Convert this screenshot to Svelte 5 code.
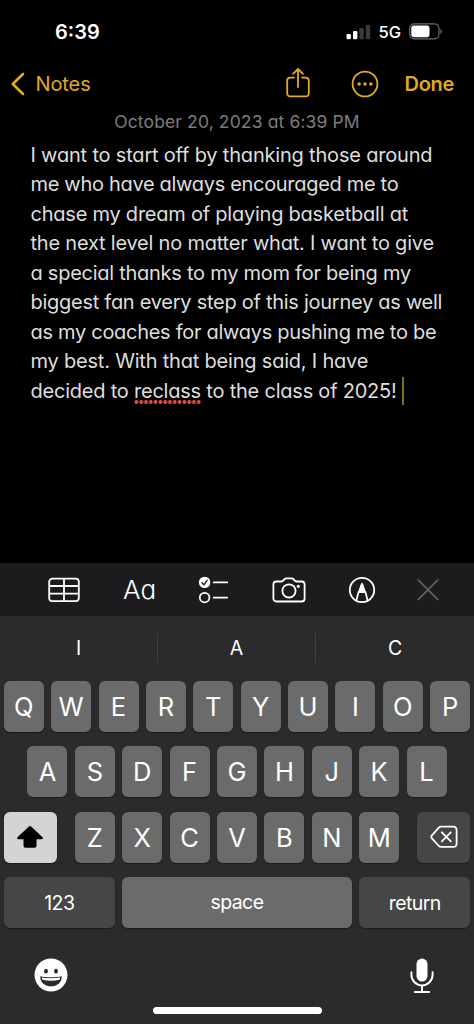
<script>
  // tracking is the letter spacing of each line, in px
  const lines = [
    { text: 'I want to start off by thanking those around', tracking: -0.19 },
    { text: 'me who have always encouraged me to', tracking: -0.31 },
    { text: 'chase my dream of playing basketball at', tracking: -0.23 },
    { text: 'the next level no matter what. I want to give', tracking: -0.21 },
    { text: 'a special thanks to my mom for being my', tracking: -0.26 },
    { text: 'biggest fan every step of this journey as well', tracking: -0.27 },
    { text: 'as my coaches for always pushing me to be', tracking: -0.29 },
    { text: 'my best. With that being said, I have', tracking: -0.2 }
  ];

  const suggestions = ['I', 'A', 'C'];
  const topRow = [...'QWERTYUIOP'];
  const homeRow = [...'ASDFGHJKL'];
  const bottomRow = [...'ZXCVBNM'];
</script>

<main>
  <header class="status">
    <span class="time">6:39</span>
    <div class="signal">
      <svg width="25" height="16" viewBox="0 0 25 16">
        <rect x="0.5" y="10" width="4.4" height="5.3" rx="1.2" fill="#fff" />
        <rect x="7" y="7" width="4.4" height="8.3" rx="1.2" fill="#fff" />
        <rect x="13.4" y="4" width="4.4" height="11.3" rx="1.2" fill="#3a3a3c" />
        <rect x="19.8" y="0.8" width="4.4" height="14.5" rx="1.2" fill="#3a3a3c" />
      </svg>
      <span class="network">5G</span>
      <svg class="battery" width="34" height="17" viewBox="0 0 34 17">
        <rect x="0.7" y="0.9" width="29.2" height="15" rx="4.4" fill="none" stroke="#6e6e70" stroke-width="1.2" />
        <rect x="2.3" y="2.6" width="18.2" height="11.6" rx="2.6" fill="#fff" />
        <path d="M31.3 6v5c1.9-.8 1.9-4.2 0-5z" fill="#6e6e70" />
      </svg>
    </div>
  </header>

  <nav>
    <div class="back">
      <svg width="16" height="26" viewBox="0 0 16 26">
        <path d="M14 3 3.8 13 14 23" fill="none" stroke="currentColor" stroke-width="2.7" stroke-linecap="round" stroke-linejoin="round" />
      </svg>
      <span>Notes</span>
    </div>
    <div class="actions">
      <svg class="share" width="26" height="32" viewBox="0 0 26 32" fill="none" stroke="currentColor" stroke-width="1.8" stroke-linecap="round" stroke-linejoin="round">
        <path d="M9 10.6H5.2a3 3 0 0 0-3 3v12.8a3 3 0 0 0 3 3h15.6a3 3 0 0 0 3-3V13.6a3 3 0 0 0-3-3H17" />
        <path d="M13 20V2.2M8.1 6.8 13 2l4.9 4.8" />
      </svg>
      <svg class="more" width="28" height="28" viewBox="0 0 28 28">
        <circle cx="14" cy="14" r="12.4" fill="none" stroke="currentColor" stroke-width="1.8" />
        <circle cx="8.1" cy="14" r="1.75" fill="currentColor" />
        <circle cx="14" cy="14" r="1.75" fill="currentColor" />
        <circle cx="19.9" cy="14" r="1.75" fill="currentColor" />
      </svg>
      <span class="done">Done</span>
    </div>
  </nav>

  <p class="date">October 20, 2023 at 6:39 PM</p>

  <article>
    {#each lines as line}
      <div style="letter-spacing: {line.tracking}px">{line.text}</div>
    {/each}
    <div class="last">decided to <span class="typo">reclass</span> to the class of 2025!<i class="caret"></i></div>
  </article>

  <div class="toolbar">
    <svg width="32" height="26" viewBox="0 0 32 26" fill="none" stroke="#fff" stroke-width="1.8">
      <rect x="1.2" y="1.6" width="29.6" height="22.6" rx="3.2" />
      <path d="M1.2 9h29.6M1.2 16.6h29.6M16 1.6v22.6" />
    </svg>
    <span class="format">Aa</span>
    <svg class="checklist" width="31" height="28" viewBox="0 0 31 28" fill="none" stroke-linecap="round" stroke-linejoin="round">
      <circle cx="6.6" cy="6.4" r="5.7" fill="#fff" />
      <path d="m4 6.8 1.9 2.1 3.3-4.7" stroke="#1c1c1e" stroke-width="1.3" />
      <circle cx="6.6" cy="21.6" r="4.8" stroke="#fff" stroke-width="1.7" />
      <path d="M15.7 6.4h13.6M15.7 21.6h13.6" stroke="#fff" stroke-width="1.7" />
    </svg>
    <svg class="camera" width="34" height="28" viewBox="0 0 34 28" fill="none" stroke="#fff" stroke-width="1.8" stroke-linejoin="round">
      <path d="M4.4 5.5h5c1 0 1.5-.4 2.1-1.1l1-1.2c.6-.7 1.2-.9 2-.9h5c.8 0 1.4.2 2 .9l1 1.2c.6.7 1.1 1.1 2.1 1.1h5a3 3 0 0 1 3 3v14a3 3 0 0 1-3 3H4.4a3 3 0 0 1-3-3v-14a3 3 0 0 1 3-3z" />
      <circle cx="17" cy="14.9" r="6.6" />
      <circle cx="26.3" cy="10.3" r="1.6" fill="#fff" stroke="none" />
    </svg>
    <svg class="markup" width="28" height="28" viewBox="0 0 28 28" fill="none" stroke="#fff">
      <circle cx="14" cy="14" r="12.2" stroke-width="1.8" />
      <path d="m8.3 24.8 2.2-8.6h7l2.2 8.6" stroke-width="1.7" stroke-linejoin="round" />
      <path d="m10.5 16.2 3-8.6q.5-1.1 1 0l3 8.6z" fill="#fff" />
    </svg>
    <svg class="close" width="22" height="22" viewBox="0 0 22 22">
      <path d="m1.4 1.2 19.2 19.2M20.6 1.2 1.4 20.4" stroke="#606062" stroke-width="1.8" stroke-linecap="round" />
    </svg>
  </div>

  <section class="keyboard">
    <div class="suggestions">
      {#each suggestions as word}
        <span>{word}</span>
      {/each}
    </div>

    <div class="row">
      {#each topRow as letter}
        <div class="key">{letter}</div>
      {/each}
    </div>
    <div class="row">
      {#each homeRow as letter}
        <div class="key">{letter}</div>
      {/each}
    </div>
    <div class="row spread">
      <div class="key shift">
        <svg width="28" height="24" viewBox="0 0 28 24">
          <path d="M12.9 1.4q1.1-1 2.2 0l11.2 10.7c1.1 1.1.7 2.2-.8 2.2h-5v6.500q0 2-2 2h-9q-2 0-2-2v-6.500h-5c-1.500 0-1.900-1.100-.8-2.200z" fill="#000" />
        </svg>
      </div>
      <div class="letters">
        {#each bottomRow as letter}
          <div class="key">{letter}</div>
        {/each}
      </div>
      <div class="key dark delete">
        <svg width="28" height="24" viewBox="0 0 28 24" fill="none" stroke="#fff" stroke-width="1.8" stroke-linecap="round" stroke-linejoin="round">
          <path d="M11 1.7h12.6a3 3 0 0 1 3 3v14.2a3 3 0 0 1-3 3H11q-1.2 0-2.1-.9l-7-7.7q-1.300-1.500 0-3l7-7.700q.9-.9 2.100-.9z" />
          <path d="m11.800 7.300 9 9M20.800 7.300l-9 9" />
        </svg>
      </div>
    </div>
    <div class="row">
      <div class="key dark word">123</div>
      <div class="key space">space</div>
      <div class="key dark word">return</div>
    </div>

    <footer>
      <svg width="34" height="34" viewBox="0 0 34 34">
        <circle cx="17" cy="17" r="16.5" fill="#fff" />
        <ellipse cx="12" cy="13.2" rx="1.9" ry="2.4" fill="#2b2b2b" />
        <ellipse cx="22" cy="13.2" rx="1.9" ry="2.4" fill="#2b2b2b" />
        <path d="M6.3 18.2c6 1.3 15.400 1.300 21.400 0 .5 6.300-5 10.100-10.700 10.100S5.800 24.500 6.300 18.200z" fill="#2b2b2b" />
        <path d="M7.700 19.500c5.700 1 12.900 1 18.600 0l-.7 2.300c-5.200 1.300-12 1.300-17.200 0z" fill="#fff" />
      </svg>
      <svg width="24" height="36" viewBox="0 0 24 36">
        <rect x="6.5" y="0.6" width="11" height="23" rx="5.5" fill="#fff" />
        <path d="M1.4 14.2v2.6a10.6 10.6 0 0 0 21.2 0v-2.6M12 27.5v6M4.8 34h14.4" fill="none" stroke="#fff" stroke-width="1.9" stroke-linecap="round" />
      </svg>
    </footer>
    <div class="home"></div>
  </section>
</main>

<style>
  :global(body) {
    margin: 0;
    background: #000;
  }

  main {
    width: 474px;
    height: 1024px;
    overflow: hidden;
    display: flex;
    flex-direction: column;
    background: #000;
    color: #fff;
    font-family: Inter, 'Liberation Sans', sans-serif;
  }

  svg {
    display: block;
    flex: none;
  }

  .status {
    height: 62px;
    box-sizing: border-box;
    padding: 1px 31px 0 55px;
    display: flex;
    align-items: center;
    justify-content: space-between;
  }

  .time {
    font-size: 20px;
    font-weight: 600;
  }

  .signal {
    display: flex;
    align-items: center;
  }

  .network {
    margin: 1px 8px 0 7px;
    font-size: 16.5px;
    font-weight: 500;
  }

  nav {
    height: 44px;
    padding: 0 20px 0 9px;
    display: flex;
    align-items: center;
    justify-content: space-between;
    color: #e0aa22;
    font-size: 20px;
  }

  .back,
  .actions {
    display: flex;
    align-items: center;
  }

  .back span {
    margin-left: 10.5px;
    letter-spacing: -0.1px;
  }

  .share {
    margin-right: 40px;
    margin-bottom: 2px;
  }

  .more {
    margin-right: 26px;
  }

  .done {
    font-weight: 600;
    letter-spacing: -0.3px;
  }

  .date {
    height: 32px;
    line-height: 32px;
    margin: 0;
    text-align: center;
    color: #7c7c80;
    font-size: 17.5px;
    letter-spacing: 0.13px;
    font-feature-settings: 'cv11';
  }

  article {
    height: 422px;
    padding: 3px 0 0 30.5px;
    white-space: nowrap;
    color: #dededf;
    font-size: 20px;
    line-height: 29.45px;
    font-feature-settings: 'cv11';
  }

  .last {
    letter-spacing: -0.22px;
  }

  .typo {
    display: inline-block;
    position: relative;
  }

  .typo::after {
    content: '';
    position: absolute;
    left: 0;
    right: 0;
    bottom: 2px;
    height: 4px;
    background: radial-gradient(circle at center, #e0483f 1.7px, transparent 2.2px) 0 0 / 4.8px 4px repeat-x;
  }

  .caret {
    display: inline-block;
    width: 2px;
    height: 28px;
    margin: -6px 0 0 5px;
    vertical-align: -7px;
    background: #8a6a1c;
  }

  .toolbar {
    height: 53px;
    display: flex;
    align-items: center;
    padding-left: 48px;
    background: #1c1c1e;
  }

  .format {
    margin-left: 43px;
    width: 33px;
    font-size: 26px;
    font-weight: 300;
    font-feature-settings: 'cv11';
  }

  .checklist {
    margin-left: 42px;
  }

  .camera {
    margin-left: 43px;
  }

  .markup {
    margin-left: 42px;
  }

  .close {
    margin-left: 41px;
  }

  .keyboard {
    flex: 1;
    background: #2b2b2b;
  }

  .suggestions {
    height: 64.5px;
    display: grid;
    grid-template-columns: repeat(3, 1fr);
    align-items: center;
    text-align: center;
    font-size: 19.5px;
  }

  .suggestions span {
    height: 30px;
    line-height: 30px;
    box-sizing: border-box;
    border-right: 1px solid #414141;
  }

  .suggestions span:last-child {
    border-right: none;
  }

  .row {
    display: flex;
    justify-content: center;
    gap: 7.4px;
    margin: 0 3.7px 14.5px;
  }

  .spread {
    justify-content: space-between;
  }

  .letters {
    display: flex;
    gap: 7.4px;
  }

  .key {
    width: 40px;
    height: 51px;
    border-radius: 6px;
    display: flex;
    align-items: center;
    justify-content: center;
    background: #6b6b6b;
    box-shadow: 0 1px 1px #1c1c1c;
    font-size: 25.5px;
  }

  .dark {
    background: #464646;
  }

  .shift,
  .delete {
    width: 53.5px;
  }

  .shift {
    background: #d4d4d4;
  }

  .word,
  .space {
    font-size: 19.5px;
    letter-spacing: -0.6px;
  }

  .word {
    width: 111.2px;
  }

  .space {
    width: 229.4px;
    height: 49px;
    padding-bottom: 2px;
  }

  footer {
    display: flex;
    justify-content: space-between;
    padding: 15px 40px 0 34.4px;
  }

  .home {
    width: 169px;
    height: 6.5px;
    margin: 13.5px auto 0;
    border-radius: 4px;
    background: #fff;
  }
</style>
